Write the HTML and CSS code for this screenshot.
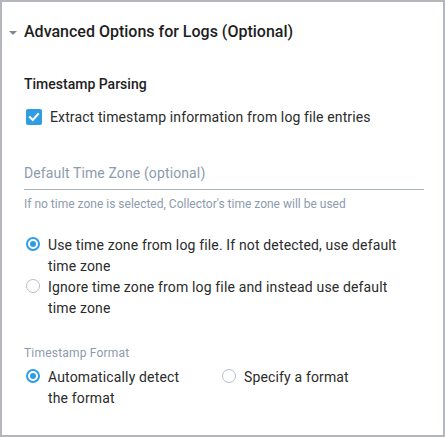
FILE: index.html
```
<!DOCTYPE html>
<html>
<head>
<meta charset="utf-8">
<link rel="stylesheet" href="styles.css">
</head>
<body>
<div class="panel">
  <div class="header">
    <span class="caret"></span>
    <span class="title">Advanced Options for Logs (Optional)</span>
  </div>
  <div class="content">
    <div class="section-title">Timestamp Parsing</div>
    <div class="check-row">
      <span class="checkbox"><svg width="12" height="12" viewBox="0 0 12 12"><path d="M2 6.2 L4.8 9 L10 3.2" fill="none" stroke="#fff" stroke-width="2.2" stroke-linecap="square"/></svg></span>
      <span class="check-label">Extract timestamp information from log file entries</span>
    </div>
    <div class="input">Default Time Zone (optional)</div>
    <div class="helper">If no time zone is selected, Collector's time zone will be used</div>
    <div class="radio-list">
      <div class="radio-row"><span class="radio on"></span><span class="radio-label">Use time zone from log file. If not detected, use default time zone</span></div>
      <div class="radio-row"><span class="radio"></span><span class="radio-label">Ignore time zone from log file and instead use default time zone</span></div>
    </div>
    <div class="field-label">Timestamp Format</div>
    <div class="format-row">
      <div class="radio-row fmt-first"><span class="radio on"></span><span class="radio-label narrow">Automatically detect the format</span></div>
      <div class="radio-row"><span class="radio"></span><span class="radio-label">Specify a format</span></div>
    </div>
  </div>
</div>
</body>
</html>
```
FILE: styles.css
```
html, body {
  margin: 0;
  padding: 0;
  background: #fff;
}
body {
  font-family: Roboto, "Liberation Sans", sans-serif;
  color: #2b2b2b;
}
.panel {
  box-sizing: border-box;
  width: 445px;
  height: 437px;
  border: 2px solid #b3b7bb;
  background: #fff;
}
.header {
  display: flex;
  align-items: center;
  margin-top: 18px;
  padding-left: 7px;
  height: 24px;
}
.caret {
  width: 0;
  height: 0;
  border-left: 4px solid transparent;
  border-right: 4px solid transparent;
  border-top: 4px solid #7d8898;
  margin-right: 7px;
  margin-top: 1px;
}
.title {
  font-size: 16px;
  font-weight: 500;
  color: #1e1e1e;
  line-height: 24px;
}
.content {
  padding: 0 19px 0 22px;
}
.section-title {
  margin-top: 30px;
  font-size: 14px;
  font-weight: 500;
  line-height: 20px;
  color: #1e1e1e;
}
.check-row {
  display: flex;
  align-items: center;
  margin-top: 13px;
  height: 20px;
}
.checkbox {
  box-sizing: border-box;
  width: 16px;
  height: 16px;
  border-radius: 2px;
  background: #2f9de4;
  margin-left: 2px;
  margin-right: 8px;
  display: flex;
  align-items: center;
  justify-content: center;
}
.check-label {
  font-size: 14px;
  line-height: 20px;
  letter-spacing: 0.12px;
}
.input {
  margin-top: 36px;
  font-size: 14px;
  line-height: 20px;
  letter-spacing: 0.12px;
  color: #8d9bad;
  padding-bottom: 6px;
  border-bottom: 1px solid #aab3bd;
}
.helper {
  margin-top: 6px;
  font-size: 12px;
  line-height: 16px;
  color: #8d9bad;
}
.radio-list {
  margin-top: 23px;
  display: flex;
  flex-direction: column;
  gap: 1px;
  width: 383px;
}
.radio-row {
  display: flex;
  align-items: flex-start;
}
.radio {
  box-sizing: border-box;
  flex: none;
  width: 14px;
  height: 14px;
  border-radius: 50%;
  border: 1px solid #b4c0cd;
  background: #fff;
  margin: 2px 8px 0 2px;
  display: flex;
  align-items: center;
  justify-content: center;
}
.radio.on {
  border: 2px solid #2f9de4;
}
.radio.on::after {
  content: "";
  width: 6px;
  height: 6px;
  border-radius: 50%;
  background: #2f9de4;
}
.radio-label {
  font-size: 14px;
  line-height: 20.5px;
  letter-spacing: 0.15px;
}
.field-label {
  margin-top: 27px;
  font-size: 12px;
  line-height: 16px;
  letter-spacing: 0.2px;
  color: #8d9bad;
}
.format-row {
  display: flex;
  margin-top: 6px;
}
.fmt-first {
  width: 196px;
}
.narrow {
  width: 140px;
}
```
